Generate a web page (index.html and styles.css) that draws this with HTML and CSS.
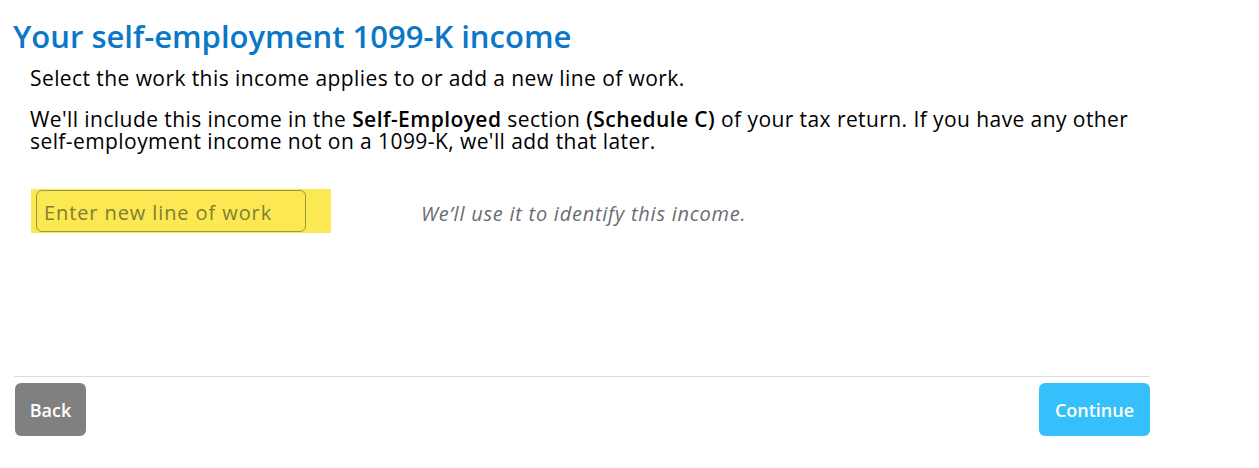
FILE: index.html
```html
<!DOCTYPE html>
<html lang="en">

<head>
    <meta charset="UTF-8" />
    <meta name="viewport" content="width=device-width, initial-scale=1.0" />
    <title>Your self-employment 1099-K income</title>
    <link rel="stylesheet" href="styles.css">
</head>

<body>
    <div id="page">
        <h1 class="title">Your self-employment 1099-K income</h1>

        <div class="intro">
            <p>Select the work this income applies to or add a new line of work.</p>
            <p>We'll include this income in the <b>Self-Employed</b> section <b>(Schedule C)</b> of your tax return. If you have any other self-employment income not on a 1099-K, we'll add that later.</p>
        </div>

        <div class="campo">
            <div class="destaque">
                <input id="linhaTrabalho" placeholder="Enter new line of work" />
            </div>
            <span class="dica">We’ll use it to identify this income.</span>
        </div>

        <div class="rodape">
            <button class="btn voltar">Back</button>
            <button class="btn continuar">Continue</button>
        </div>
    </div>
</body>

</html>
```

FILE: styles.css
```css
* {
    box-sizing: border-box;
}

body {
    font-family: 'Open Sans', Lato, sans-serif;
    margin: 0;
    padding: 0;
    background: #fff;
    color: #000;
}

#page {
    width: 1136px;
    margin-left: 14px;
}

.title {
    font-size: 31px;
    font-weight: 600;
    color: #0a77c7;
    margin: 0;
    padding-top: 16px;
    margin-left: -1px;
    line-height: 40px;
}

.intro {
    padding-left: 16px;
    padding-top: 11px;
}

.intro p {
    margin: 0 0 19px 0;
    font-size: 21px;
    letter-spacing: 0.42px;
    line-height: 22px;
}

.intro b {
    font-weight: 600;
}

.campo {
    display: flex;
    align-items: center;
    margin-top: 37px;
    padding-left: 17px;
}

.destaque {
    background: #fce853;
    width: 300px;
    height: 44px;
    padding: 1px 25px 1px 5px;
}

input {
    width: 100%;
    height: 42px;
    border: 1px solid #9c9a3e;
    border-radius: 6px;
    background: transparent;
    padding: 2px 7px 0;
    font-family: inherit;
    font-size: 20px;
    letter-spacing: 0.9px;
}

input::placeholder {
    color: #7f7f30;
}

.dica {
    margin-left: 90px;
    margin-top: 4px;
    font-style: italic;
    font-size: 20px;
    letter-spacing: 0.75px;
    color: #6b6c72;
}

.rodape {
    display: flex;
    justify-content: space-between;
    margin-top: 143px;
    border-top: 1px solid #d4dfe7;
    padding-top: 6px;
}

.btn {
    height: 53px;
    border: none;
    border-radius: 6px;
    color: #fff;
    font-family: inherit;
    font-size: 18px;
    font-weight: 600;
    padding: 0 10px;
    cursor: pointer;
}

.voltar {
    background: #808080;
    width: 71px;
    margin-left: 1px;
}

.continuar {
    background: #36c0fb;
    width: 111px;
}
```
